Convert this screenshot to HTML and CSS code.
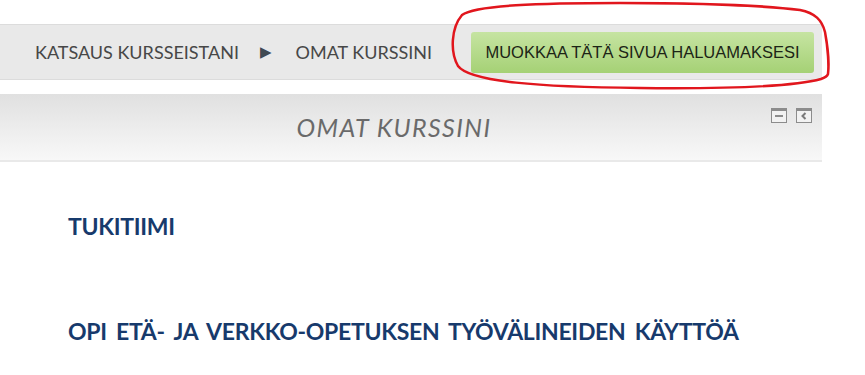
FILE: index.html
```html
<!DOCTYPE html>
<html lang="fi">
<head>
<meta charset="utf-8">
<title>Omat kurssini</title>
<link rel="stylesheet" href="styles.css">
</head>
<body>
<div class="page">
  <nav class="navbar">
    <div class="crumbs">
      <span class="crumb">KATSAUS KURSSEISTANI</span>
      <span class="sep">&#9654;</span>
      <span class="crumb">OMAT KURSSINI</span>
    </div>
    <a class="edit-btn">MUOKKAA TÄTÄ SIVUA HALUAMAKSESI</a>
  </nav>

  <section class="block">
    <div class="block-header">
      <h2 class="block-title">OMAT KURSSINI</h2>
      <div class="block-controls">
        <span class="ctl">
          <svg width="16" height="15" viewBox="0 0 16 15"><rect x="0.5" y="0.5" width="15" height="14" fill="#f2f2f2" stroke="#8c8c8c"/><rect x="0" y="0" width="16" height="3" fill="#8c8c8c"/><rect x="4" y="7" width="8" height="2" fill="#8c8c8c"/></svg>
        </span>
        <span class="ctl">
          <svg width="16" height="15" viewBox="0 0 16 15"><rect x="0.5" y="0.5" width="15" height="14" fill="#f2f2f2" stroke="#8c8c8c"/><rect x="0" y="0" width="16" height="3" fill="#8c8c8c"/><path d="M9.5 5 L6.5 8 L9.5 11" fill="none" stroke="#7a7a7a" stroke-width="2"/></svg>
        </span>
      </div>
    </div>
    <div class="block-content">
      <h3 class="course">TUKITIIMI</h3>
      <h3 class="course">OPI ETÄ- JA VERKKO-OPETUKSEN TYÖVÄLINEIDEN KÄYTTÖÄ</h3>
    </div>
  </section>

  <svg class="annotation" width="865" height="100" viewBox="0 0 865 100">
    <path d="M821 79 C 800 85, 740 89, 640 88 C 540 87, 470 82, 458 66 C 450 52, 451 28, 462 15 C 475 5, 540 3, 620 3 C 700 3, 770 6, 800 10 C 815 13, 822 20, 825 32 C 828 48, 829 66, 828 74 C 827 77, 824 78, 821 79" fill="none" stroke="#e1161d" stroke-width="2.5" stroke-linecap="round"/>
  </svg>
</div>
</body>
</html>
```

FILE: styles.css
```css
html, body {
  margin: 0;
  padding: 0;
  background: #ffffff;
}

.page {
  position: relative;
  width: 865px;
  height: 375px;
  overflow: hidden;
}

.navbar {
  margin-top: 24px;
  width: 822px;
  height: 54px;
  box-sizing: content-box;
  background: #e9e9e9;
  border-top: 1px solid #dcdcdc;
  border-bottom: 1px solid #dcdcdc;
  display: flex;
  align-items: center;
}

.crumbs {
  display: flex;
  align-items: center;
  padding-left: 35px;
  font-family: Lato, "Open Sans", sans-serif;
  font-size: 18px;
  color: #474747;
  letter-spacing: 0;
}

.sep {
  font-family: "DejaVu Sans", sans-serif;
  font-size: 15px;
  color: #3f4a52;
  margin: 0 24px 0 21px;
}

.edit-btn {
  margin-left: auto;
  margin-right: 8px;
  width: 343px;
  height: 41px;
  display: flex;
  align-items: center;
  justify-content: center;
  border-radius: 3px;
  background: linear-gradient(#c6e4a2, #a5d175);
  font-family: "Liberation Sans", Arial, sans-serif;
  font-size: 16.5px;
  color: #1c2416;
}

.block {
  margin-top: 14px;
  width: 822px;
}

.block-header {
  height: 66px;
  background: linear-gradient(#e0e0e0, #f8f8f8);
  border-bottom: 2px solid #e9e9e9;
  display: flex;
}

.block-title {
  flex: 1;
  margin: 0;
  padding-left: 17px;
  text-align: center;
  font-family: Lato, "Open Sans", sans-serif;
  font-style: italic;
  font-weight: 400;
  font-size: 25px;
  color: #6a6a6a;
  letter-spacing: 1.4px;
  line-height: 66px;
}

.block-controls {
  display: flex;
  gap: 9px;
  padding: 14px 10px 0 0;
}

.ctl {
  display: block;
  width: 16px;
  height: 15px;
}

.ctl svg {
  display: block;
}

.block-content {
  padding: 50px 0 0 68px;
}

.course {
  margin: 0 0 77px 0;
  font-family: Lato, "Open Sans", sans-serif;
  font-weight: 700;
  font-size: 23px;
  line-height: 28px;
  color: #173a6c;
  letter-spacing: -0.3px;
  word-spacing: 4px;
}

.annotation {
  position: absolute;
  left: 0;
  top: 0;
  pointer-events: none;
}
```
